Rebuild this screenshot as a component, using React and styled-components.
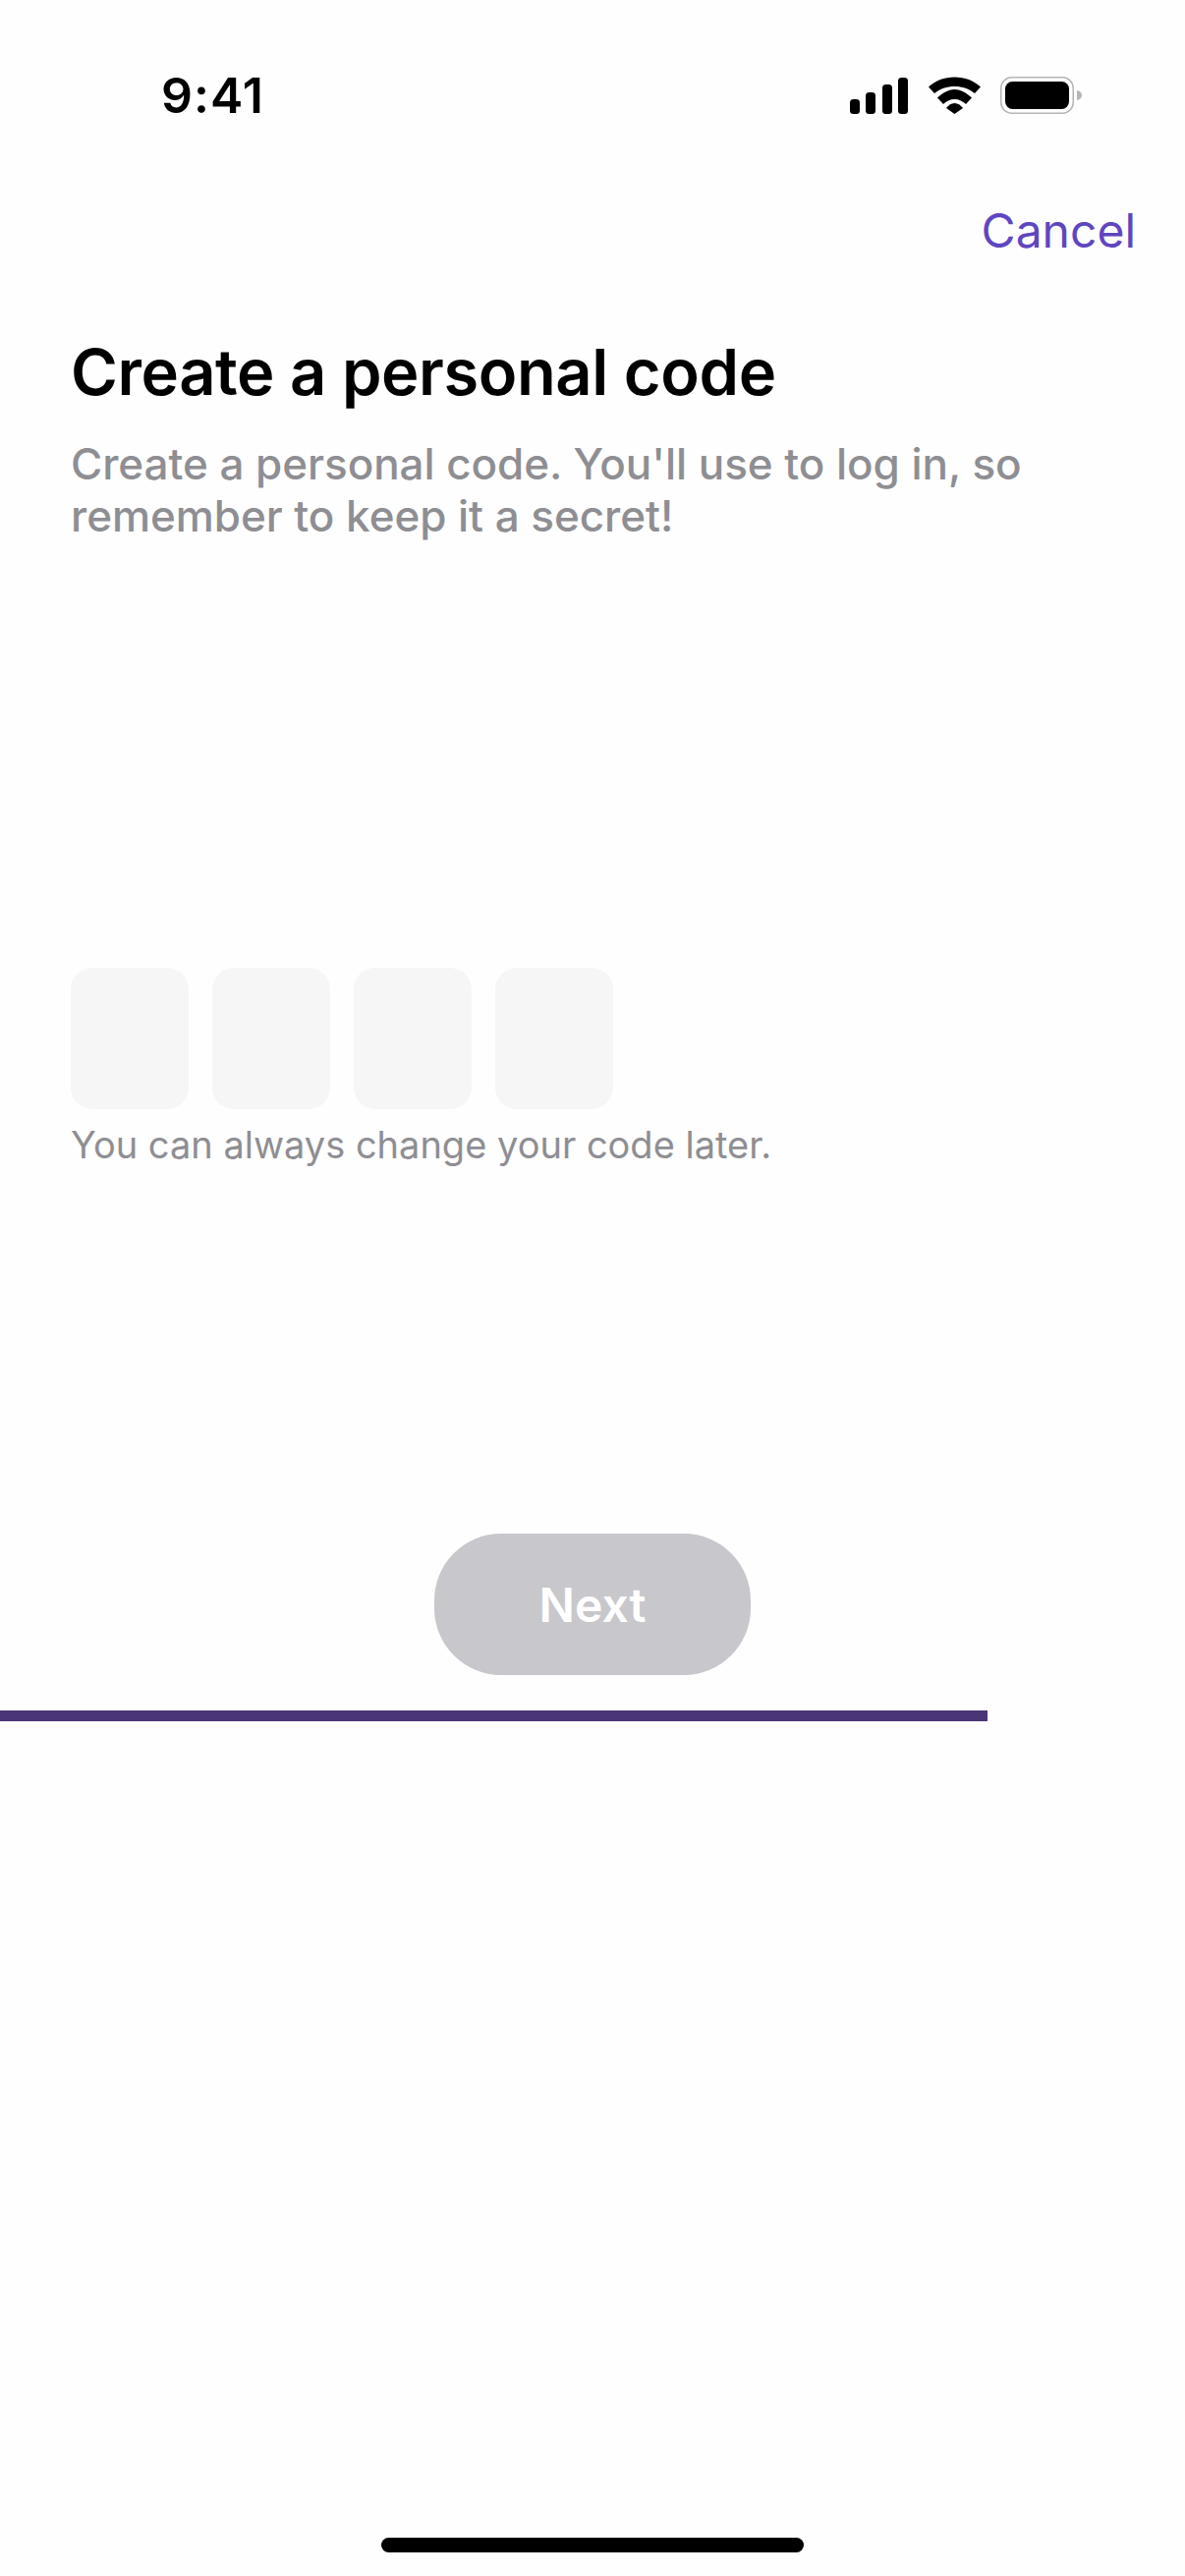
import React from 'react';
import styled, { createGlobalStyle } from 'styled-components';

const GlobalStyle = createGlobalStyle`
  html, body {
    margin: 0;
    padding: 0;
    background: #fefefe;
  }
  * {
    box-sizing: border-box;
  }
`;

const Screen = styled.div`
  width: 1206px;
  height: 2622px;
  overflow: hidden;
  background: #fefefe;
  font-family: Inter, "Liberation Sans", sans-serif;
  display: flex;
  flex-direction: column;
`;

const StatusBar = styled.div`
  height: 78px;
  margin-top: 58px;
  display: flex;
  align-items: center;
  justify-content: space-between;
  padding: 0 105px 0 164px;
`;

const Clock = styled.div`
  font-size: 50px;
  font-weight: 600;
  line-height: 78px;
  color: #000;
  letter-spacing: 1px;
`;

const StatusIcons = styled.div`
  display: flex;
  align-items: center;
  gap: 20.5px;
`;

const TopRow = styled.div`
  display: flex;
  justify-content: flex-end;
  padding: 69px 50px 0 0;
`;

const CancelLink = styled.a`
  font-size: 48px;
  font-weight: 400;
  line-height: 60px;
  color: #5f46c0;
`;

const Content = styled.div`
  padding: 0 72px;
  margin-top: 74px;
`;

const Title = styled.h1`
  margin: 0;
  font-size: 65px;
  font-weight: 600;
  line-height: 80px;
  letter-spacing: -0.4px;
  color: #000;
`;

const Subtitle = styled.p`
  margin: 27px 0 0;
  width: 1000px;
  font-size: 44px;
  font-weight: 500;
  line-height: 53px;
  letter-spacing: -0.05px;
  color: #8e8e93;
`;

const CodeRow = styled.div`
  display: flex;
  gap: 24px;
  margin-top: 433px;
`;

const CodeBox = styled.div`
  width: 120px;
  height: 144px;
  border-radius: 22px;
  background: #f6f6f6;
`;

const Hint = styled.p`
  margin: 14px 0 0;
  font-size: 38px;
  font-weight: 400;
  line-height: 44px;
  color: #8e8e93;
`;

const ButtonRow = styled.div`
  display: flex;
  justify-content: center;
  margin-top: 374px;
`;

const NextButton = styled.button`
  width: 322px;
  height: 144px;
  border: none;
  border-radius: 68px;
  background: #c7c7cc;
  color: #fff;
  font-family: inherit;
  font-size: 48px;
  font-weight: 600;
`;

const Progress = styled.div`
  width: 1005px;
  height: 11px;
  margin-top: 36px;
  background: #4a3578;
`;

const HomeBar = styled.div`
  width: 430px;
  height: 15px;
  margin: auto auto 24px;
  border-radius: 8px;
  background: #000;
`;

const SignalIcon = () => (
  <svg width="59" height="37" viewBox="0 0 59 37" fill="#000">
    <rect x="0" y="22" width="10" height="15" rx="3.5" />
    <rect x="16" y="15" width="10" height="22" rx="3.5" />
    <rect x="33" y="7" width="10" height="30" rx="3.5" />
    <rect x="49" y="0" width="10" height="37" rx="3.5" />
  </svg>
);

const WifiIcon = () => (
  <svg width="53" height="38" viewBox="0 0 53 38" fill="#000">
    <path d="M0 10.5C7 4 16 0.5 26.5 0.5S46 4 53 10.5L47 17C41.500 12.500 34.500 10 26.500 10S11.500 12.500 6 17Z" />
    <path d="M9 21.500C13.500 17.500 19.500 13 26.500 13S39.500 17.500 44 21.500L38 28C35 25 31 23 26.500 23S18 25 15 28Z" />
    <path d="M18 32C20 29.500 23 27 26.500 27S33 29.500 35 32L26.500 38Z" />
  </svg>
);

const BatteryIcon = () => (
  <svg width="83" height="38" viewBox="0 0 83 38">
    <rect x="0.75" y="0.750" width="73.500" height="36.500" rx="11" fill="none" stroke="#b4b4ba" strokeWidth="1.500" />
    <rect x="5" y="5" width="65" height="28" rx="7.500" fill="#000" />
    <path d="M78 14C81 14.500 83 16.500 83 19S81 23.500 78 24Z" fill="#b4b4ba" />
  </svg>
);

const App = () => {
  return (
    <Screen>
      <GlobalStyle />
      <StatusBar>
        <Clock>9:41</Clock>
        <StatusIcons>
          <SignalIcon />
          <WifiIcon />
          <BatteryIcon />
        </StatusIcons>
      </StatusBar>
      <TopRow>
        <CancelLink>Cancel</CancelLink>
      </TopRow>
      <Content>
        <Title>Create a personal code</Title>
        <Subtitle>Create a personal code. You'll use to log in, so remember to keep it a secret!</Subtitle>
        <CodeRow>
          {[0, 1, 2, 3].map((i) => (
            <CodeBox key={i} />
          ))}
        </CodeRow>
        <Hint>You can always change your code later.</Hint>
      </Content>
      <ButtonRow>
        <NextButton>Next</NextButton>
      </ButtonRow>
      <Progress />
      <HomeBar />
    </Screen>
  );
};

export default App;
